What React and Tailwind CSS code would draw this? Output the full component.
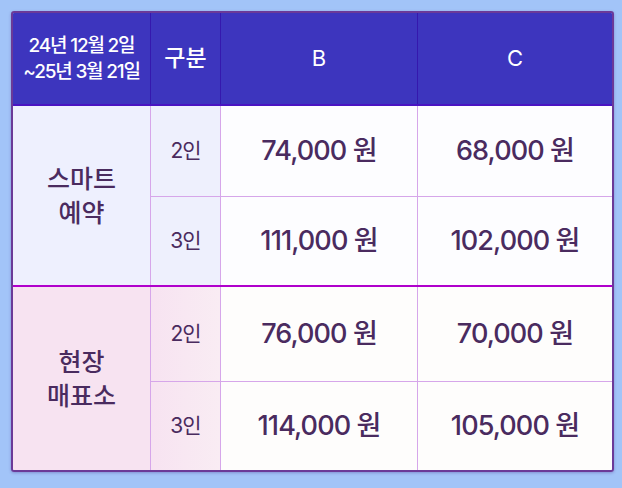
const ROWS = [
  { group: ['스마트', '예약'], tone: 'smart', items: [['2인', '74,000 원', '68,000 원'], ['3인', '111,000 원', '102,000 원']] },
  { group: ['현장', '매표소'], tone: 'onsite', items: [['2인', '76,000 원', '70,000 원'], ['3인', '114,000 원', '105,000 원']] },
];

const font = { fontFamily: 'Inter, "Noto Sans CJK KR", sans-serif' };

function Section({ group, tone, items, last }) {
  const left = tone === 'smart' ? 'bg-[#eef0fe]' : 'bg-[#f7e3f1]';
  const mid = tone === 'smart' ? 'bg-[#eef0fd]' : 'bg-gradient-to-r from-[#f7e3f1] to-[#f9ecf3]';
  const priceBg = tone === 'smart' ? 'bg-[#fdfdff]' : 'bg-[#fefdfc]';
  const heights = tone === 'smart' ? ['h-[91px]', 'h-[88px]'] : ['h-[95px]', 'h-[88px]'];
  return (
    <div className={`flex ${last ? '' : 'border-b-2 border-[#b000cc]'}`}>
      <div className={`w-[138px] shrink-0 flex flex-col items-center justify-center border-r border-[#d6a6ea] ${left} text-[25px] font-medium leading-[34px] text-[#4a2b5f]`}>
        {group.map(g => <span key={g}>{g}</span>)}
      </div>
      <div className="flex-1 flex flex-col">
        {items.map((it, i) => (
          <div key={it[0]} className={`flex ${heights[i]} ${i === 0 ? 'border-b border-[#d6a6ea]' : ''}`}>
            <div className={`w-[70px] shrink-0 flex items-center justify-center border-r border-[#d6a6ea] ${mid} text-[21px] text-[#4a2b5f] tracking-[-1px]`}>
              {it[0]}
            </div>
            <div className={`w-[197px] shrink-0 flex items-center justify-center border-r border-[#d6a6ea] ${priceBg} text-[27px] font-medium tracking-[-0.9px] text-[#4a2b5f]`}>
              {it[1]}
            </div>
            <div className={`flex-1 flex items-center justify-center ${priceBg} text-[27px] font-medium tracking-[-0.9px] text-[#4a2b5f]`}>
              {it[2]}
            </div>
          </div>
        ))}
      </div>
    </div>
  );
}

export default function App() {
  return (
    <div className="w-[622px] h-[488px] bg-[#a2c4f8] pt-[11px] pl-[11px]" style={font}>
      <div className="w-[603px] border-2 border-[#6b3a98] rounded-[3px] overflow-hidden shadow-[0_1px_3px_rgba(60,20,120,0.3)]">
        <div className="flex h-[93px] bg-[#3d35be] text-white border-b-2 border-[#4a14c2]">
          <div className="w-[138px] shrink-0 flex flex-col items-center justify-center border-r border-[#3518ae] text-[19px] font-medium leading-[26px] tracking-[-1.2px]">
            <span>24년 12월 2일</span>
            <span>~25년 3월 21일</span>
          </div>
          <div className="w-[70px] shrink-0 flex items-center justify-center border-r border-[#3518ae] text-[23px] font-medium">
            구분
          </div>
          <div className="w-[197px] shrink-0 flex items-center justify-center border-r border-[#3518ae] text-[22px]">
            B
          </div>
          <div className="flex-1 flex items-center justify-center text-[22px]">
            C
          </div>
        </div>
        {ROWS.map((r, i) => (
          <Section key={r.tone} {...r} last={i === ROWS.length - 1} />
        ))}
      </div>
    </div>
  );
}
